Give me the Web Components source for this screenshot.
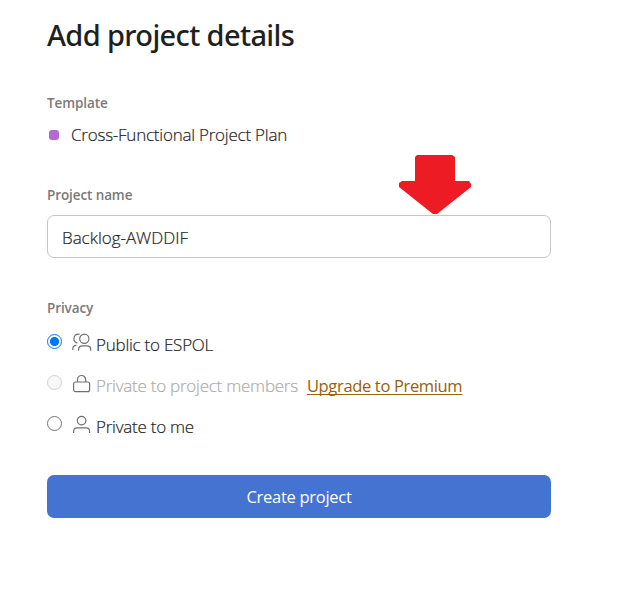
<!DOCTYPE html>
<html lang="en">
<head>
<meta charset="utf-8">
<title>Add project details</title>
<style>
body { margin: 0; background: #fff; color: #242424; font: 300 17px/24px "Open Sans", "Noto Sans", sans-serif; }
</style>
</head>
<body>
<project-form></project-form>
<script>
class Base extends HTMLElement {
  constructor() {
    super();
    this.attachShadow({ mode: "open" }).innerHTML = this.render();
  }
}

customElements.define("form-section", class extends Base {
  render() {
    return `<style>
      :host { display: block; }
      .label { font-size: 13.5px; font-weight: 600; line-height: 20px; color: #7b7977; letter-spacing: -.1px; }
    </style><div class="label"><slot name="label"></slot></div><slot></slot>`;
  }
});

customElements.define("template-name", class extends Base {
  render() {
    return `<style>
      :host { display: flex; align-items: center; height: 24px; margin-top: 10px; padding-left: 2px; letter-spacing: -.23px; -webkit-text-stroke: .2px; }
      i { width: 10px; height: 10px; border-radius: 3px; background: #b36ad4; margin-right: 12px; }
    </style><i></i><slot></slot>`;
  }
});

customElements.define("text-field", class extends Base {
  render() {
    return `<style>
      :host { display: flex; align-items: center; box-sizing: border-box; height: 43px; margin-top: 10px; padding: 2px 14px 0;
        border: 1px solid #c8c6c4; border-radius: 7px; letter-spacing: -.02px; -webkit-text-stroke: .2px; }
    </style><slot></slot>`;
  }
});

customElements.define("line-icon", class extends HTMLElement {
  connectedCallback() {
    const shapes = {
      people: '<circle cx="12.3" cy="5.8" r="4.6"/><path d="M6.6 17.8v-1.3q0-3.6 3.8-3.6h4.4q3.9 0 3.9 3.6v1.3M7.6 1.3C.8.4.3 8.9 5.4 10.2M.8 17v-1.3q0-3 3.6-3.3"/>',
      lock: '<rect x="1.6" y="8" width="16" height="9.7" rx="2"/><path d="M5.5 8V5.6a4.1 4.1 0 0 1 8.2 0V8"/>',
      person: '<circle cx="9.6" cy="5.6" r="4.3"/><path d="M1.6 18v-1.5q0-3.7 3.6-3.7h8.8q3.6 0 3.6 3.7V18"/>'
    };
    const root = this.shadowRoot || this.attachShadow({ mode: "open" });
    root.innerHTML = `<style>:host { display: block; width: 20px; height: 19px; } svg { display: block; }</style>
      <svg width="20" height="19" fill="none" stroke="#707070" stroke-width="1.2">${shapes[this.getAttribute("name")]}</svg>`;
  }
});

customElements.define("privacy-option", class extends Base {
  render() {
    return `<style>
      :host { display: flex; align-items: flex-start; height: 41px; }
      .radio { box-sizing: border-box; width: 15px; height: 15px; margin-top: 1px; border: 1.2px solid #767676; border-radius: 50%; }
      :host([checked]) .radio { border: 1.5px solid #0075ff; background: radial-gradient(circle, #0075ff 4.2px, #fff 4.8px); }
      :host([disabled]) .radio { border-color: #d1d1d1; background: #f8f8f8; }
      .text { letter-spacing: -.24px; -webkit-text-stroke: .2px; white-space: nowrap; }
      :host([disabled]) .text { color: #aeacaa; }
      ::slotted(upgrade-link) { margin-left: 9px; }
    </style><span class="radio"></span><slot name="icon"></slot><span class="text"><slot></slot></span><slot name="action"></slot>`;
  }
});

customElements.define("upgrade-link", class extends Base {
  render() {
    return `<style>
      :host { display: block; }
      a { font-size: 16.5px; font-weight: 400; letter-spacing: -.34px; color: #986008; text-decoration: underline; text-decoration-thickness: 1px; text-underline-offset: 2px; text-decoration-skip-ink: none; }
    </style><a><slot></slot></a>`;
  }
});

customElements.define("primary-button", class extends Base {
  render() {
    return `<style>
      :host { display: flex; justify-content: center; align-items: center; height: 43px; border-radius: 7px; background: #4573d2; }
      button { border: 0; padding: 0; background: none; color: #fff; font: 400 16.5px/24px "Open Sans", "Noto Sans", sans-serif; letter-spacing: -.28px; }
    </style><button><slot></slot></button>`;
  }
});

customElements.define("down-arrow", class extends Base {
  render() {
    return `<style>:host { position: absolute; left: 399px; top: 155px; } svg { display: block; }</style>
      <svg width="72" height="60"><path fill="#ed1c24" d="M18 0H53L56 2V26H70L72 29V32L38 59H34L0 32V28L3 26H16V2Z"/></svg>`;
  }
});

customElements.define("project-form", class extends Base {
  render() {
    return `<style>
      :host { display: block; box-sizing: border-box; width: 551px; padding: 15px 0 0 47px; }
      h1 { margin: 0 0 38px; font: 500 29px/40px "Noto Sans", sans-serif; color: #1e1f21; letter-spacing: -.64px; white-space: nowrap; }
      form-section + form-section { margin-top: 38px; }
      form-section.privacy { margin-top: 40px; }
      .options { padding-top: 15px; }
      line-icon { margin: 0 4px 0 10px; }
      primary-button { margin-top: 19px; }
    </style>
    <h1>Add project details</h1>
    <form-section><span slot="label">Template</span><template-name>Cross-Functional Project Plan</template-name></form-section>
    <form-section><span slot="label">Project name</span><text-field>Backlog-AWDDIF</text-field></form-section>
    <form-section class="privacy"><span slot="label">Privacy</span>
      <div class="options">
        <privacy-option checked><line-icon slot="icon" name="people"></line-icon>Public to ESPOL</privacy-option>
        <privacy-option disabled><line-icon slot="icon" name="lock"></line-icon>Private to project members<upgrade-link slot="action">Upgrade to Premium</upgrade-link></privacy-option>
        <privacy-option><line-icon slot="icon" name="person"></line-icon>Private to me</privacy-option>
      </div>
    </form-section>
    <primary-button>Create project</primary-button>
    <down-arrow></down-arrow>`;
  }
});
</script>
</body>
</html>
